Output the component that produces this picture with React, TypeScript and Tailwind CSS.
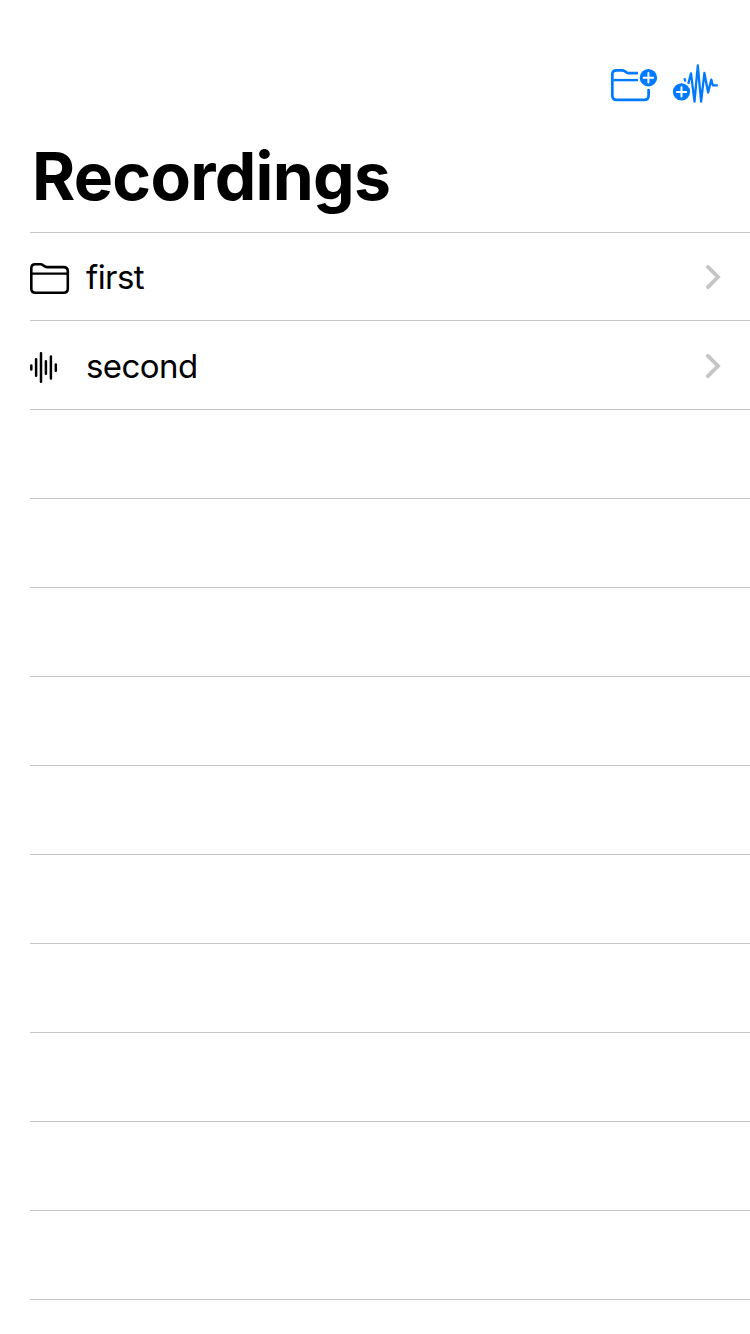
import type { ReactNode } from 'react';

function FolderPlusIcon() {
  return (
    <svg width="48" height="40" viewBox="610 64 48 40" fill="none" stroke="#007aff" strokeWidth="2.7" strokeLinecap="butt">
      <path d="M638 73.1H628.5C627.3 73.1 626.6 72.7 625.8 72L624.8 71.2C623.9 70.5 623.2 70.3 622 70.3H616.5C613.7 70.3 612.3 71.8 612.3 74.5V95.5C612.3 98.4 613.8 99.9 616.7 99.9H644.3C647.1 99.9 648.6 98.4 648.6 95.5V89" />
      <path d="M612.3 80.1H638" strokeWidth="2.4" />
      <circle cx="648.4" cy="77.7" r="8.7" fill="#007aff" stroke="none" />
      <path d="M643.6 77.7H653.2M648.4 72.9V82.5" stroke="white" strokeWidth="2" strokeLinecap="round" />
    </svg>
  );
}

function WaveformPlusIcon() {
  return (
    <svg width="48" height="42" viewBox="671 63 48 42" fill="none" stroke="#007aff" strokeWidth="2.3" strokeLinecap="round" strokeLinejoin="round">
      <path d="M684.7 79.2L685.1 80.6" />
      <path d="M688.4 83.2L691 73.4L694.5 101.6L697.8 65.5L701.1 101.6L704.4 73L708.1 92.5L711.3 79.6L712.8 85.3H717" />
      <circle cx="681.5" cy="91.9" r="10.4" fill="white" stroke="none" />
      <circle cx="681.5" cy="91.9" r="8.6" fill="#007aff" stroke="none" />
      <path d="M676.8 91.9H686.2M681.5 87.2V96.6" stroke="white" strokeWidth="2" />
    </svg>
  );
}

function FolderIcon() {
  return (
    <svg width="40" height="34" viewBox="30 261 40 34" fill="none" stroke="black" strokeWidth="2.6">
      <path d="M31.3 268.4C31.3 265.7 32.6 264.3 35.3 264.3H40.3C41.5 264.3 42.2 264.5 43.1 265.2L44.2 266.1C45 266.8 45.8 267.1 47 267.1H63.6C66.4 267.1 67.8 268.5 67.8 271.3V288.4C67.8 291.2 66.4 292.7 63.6 292.7H35.5C32.6 292.7 31.3 291.2 31.3 288.4Z" />
      <path d="M31.3 273.6H67.8" strokeWidth="2.3" />
    </svg>
  );
}

function WaveformIcon() {
  return (
    <svg width="28" height="34" viewBox="30 350 28 34" fill="none" stroke="black" strokeWidth="2.5" strokeLinecap="round">
      <path d="M31.3 365.4V369.4M36.1 359.3V375.7M41 353.2V381.8M45.9 361.3V373.7M50.9 356.4V378.6M55.8 364.4V370.7" />
    </svg>
  );
}

function Chevron() {
  return (
    <svg className="mr-[29px] ml-auto" width="16" height="26" viewBox="0 0 16 26" fill="none" stroke="#c5c5c7" strokeWidth="3.8">
      <path d="M2.9 2.9L13 13L2.9 23.1" strokeLinecap="round" />
    </svg>
  );
}

function Row({ icon, label, className }: { icon: ReactNode; label: string; className: string }) {
  return (
    <li className={`flex items-center border-b border-[#c6c6c8] ${className}`}>
      <span className="flex w-14 shrink-0 pt-0.5">{icon}</span>
      <span className="text-[33px] leading-[44px] tracking-[-0.55px]">{label}</span>
      <Chevron />
    </li>
  );
}

export default function App() {
  return (
    <main className="flex h-[1334px] w-[750px] flex-col overflow-hidden bg-white font-['Inter',sans-serif] text-black">
      <header className="h-[232px] shrink-0">
        <nav className="flex items-start justify-end gap-[13px] pt-[63px] pr-[31px]">
          <button className="pt-px" aria-label="New folder"><FolderPlusIcon /></button>
          <button aria-label="New recording"><WaveformPlusIcon /></button>
        </nav>
        <h1 className="mt-[31px] pl-8 text-[66px] leading-[80px] font-bold tracking-[-0.75px]">Recordings</h1>
      </header>
      <ul className="ml-[30px] border-t border-[#c6c6c8]">
        <Row icon={<FolderIcon />} label="first" className="h-[88px]" />
        <Row icon={<WaveformIcon />} label="second" className="h-[89px] pt-0.5" />
        {Array.from({ length: 10 }, (_, i) => (
          <li key={i} className="h-[89px] border-b border-[#c6c6c8]" />
        ))}
      </ul>
    </main>
  );
}
